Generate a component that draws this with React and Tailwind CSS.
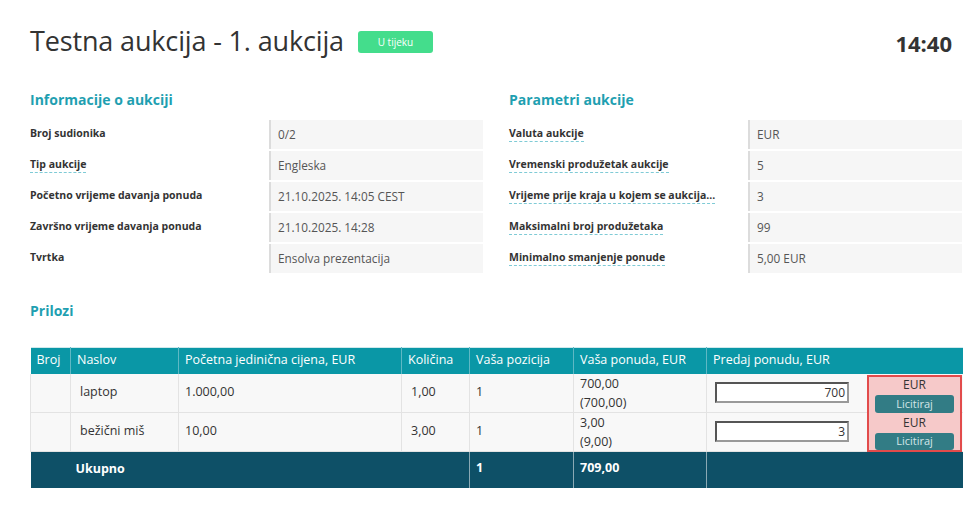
import React from "react";

const leftRows = [
  { l: "Broj sudionika", v: "0/2" },
  { l: "Tip aukcije", v: "Engleska", u: true },
  { l: "Početno vrijeme davanja ponuda", v: "21.10.2025. 14:05 CEST" },
  { l: "Završno vrijeme davanja ponuda", v: "21.10.2025. 14:28" },
  { l: "Tvrtka", v: "Ensolva prezentacija" },
];
const rightRows = [
  { l: "Valuta aukcije", v: "EUR", u: true },
  { l: "Vremenski produžetak aukcije", v: "5", u: true },
  { l: "Vrijeme prije kraja u kojem se aukcija...", v: "3", u: true },
  { l: "Maksimalni broj produžetaka", v: "99", u: true },
  { l: "Minimalno smanjenje ponude", v: "5,00 EUR", u: true },
];

function InfoTable({ title, rows }) {
  return (
    <div className="flex flex-col">
      <h2 className="text-[14px] font-bold text-[#1f9fb1] leading-[20px] mb-[10px]">{title}</h2>
      <div className="flex flex-col gap-[2px]">
        {rows.map((r, i) => (
          <div key={i} className="flex h-[29px]">
            <div className="w-[239px] flex items-start pt-[6px]">
              <span
                className={
                  "text-[10.5px] font-bold text-[#333] leading-[15px] " +
                  (r.u ? "border-b border-dashed border-[#7fcbd6]" : "")
                }
              >
                {r.l}
              </span>
            </div>
            <div className="flex-1 bg-[#f6f6f6] border-l-2 border-[#dcdcdc] pl-[7px] flex items-center text-[11.8px] text-[#555]">
              {r.v}
            </div>
          </div>
        ))}
      </div>
    </div>
  );
}

export default function App() {
  const th = "text-left font-normal px-[6px] border-r border-[#5fb8c4] last:border-r-0";
  const td = "px-[6px] border-r border-b border-[#e3e3e3] text-[12.5px] text-[#333]";
  return (
    <div
      className="w-[974px] h-[505px] bg-white pl-[30px] pr-[12px] pt-[24px] overflow-hidden"
      style={{ fontFamily: "'Open Sans', 'Noto Sans', sans-serif" }}
    >
      <div className="flex items-center justify-between h-[34px]">
        <div className="flex items-center">
          <h1 className="text-[27px] font-normal text-[#333] leading-[34px] tracking-[-0.15px]">
            Testna aukcija - 1. aukcija
          </h1>
          <span className="ml-[14px] mt-[2px] bg-[#44dd8c] text-white text-[10px] rounded-[3px] w-[75px] h-[22px] flex items-center justify-center">
            U tijeku
          </span>
        </div>
        <div className="text-[22px] font-bold text-[#333] mr-[10px] mt-[4px]">14:40</div>
      </div>

      <div className="grid grid-cols-[453px_453px] gap-x-[26px] mt-[32px]">
        <InfoTable title="Informacije o aukciji" rows={leftRows} />
        <InfoTable title="Parametri aukcije" rows={rightRows} />
      </div>

      <h2 className="text-[14px] font-bold text-[#1f9fb1] leading-[20px] mt-[28px]">Prilozi</h2>

      <div className="relative mt-[26px] w-[932px]">
        <table className="w-[932px] table-fixed border-collapse">
          <colgroup>
            <col className="w-[40px]" />
            <col className="w-[108px]" />
            <col className="w-[223px]" />
            <col className="w-[68px]" />
            <col className="w-[104px]" />
            <col className="w-[133px]" />
            <col className="w-[256px]" />
          </colgroup>
          <thead>
            <tr className="bg-[#0a97a6] text-white text-[12.5px] h-[26px] border-t border-[#cfe9ec]">
              <th className={th}>Broj</th>
              <th className={th}>Naslov</th>
              <th className={th}>Početna jedinična cijena, EUR</th>
              <th className={th}>Količina</th>
              <th className={th}>Vaša pozicija</th>
              <th className={th}>Vaša ponuda, EUR</th>
              <th className={th}>Predaj ponudu, EUR</th>
            </tr>
          </thead>
          <tbody className="bg-[#f8f8f8]">
            {[
              { n: "laptop", p: "1.000,00", q: "1,00", pos: "1", o: "700,00", ot: "(700,00)", in: "700" },
              { n: "bežični miš", p: "10,00", q: "3,00", pos: "1", o: "3,00", ot: "(9,00)", in: "3" },
            ].map((r, i) => (
              <tr key={i} className="h-[38px]">
                <td className={td + " border-l"}></td>
                <td className={td + " pl-[9px]"}>{r.n}</td>
                <td className={td}>{r.p}</td>
                <td className={td + " pl-[9px]"}>{r.q}</td>
                <td className={td}>{r.pos}</td>
                <td className={td + " leading-[19px] align-top"}>
                  <div>{r.o}</div>
                  <div>{r.ot}</div>
                </td>
                <td className={td + " border-r-0 pl-[8px]"}>
                  <div className="w-[134px] h-[21px] bg-white border-2 border-t-[#555] border-l-[#555] border-b-[#999] border-r-[#999] text-right pr-[2px] text-[12px] leading-[17px] text-[#333]">
                    {r.in}
                  </div>
                </td>
              </tr>
            ))}
            <tr className="h-[37px] bg-[#0e5067] text-white text-[12.5px] font-bold">
              <td colSpan={4} className="pl-[45px] align-middle border-r border-[#8aa9b4]">Ukupno</td>
              <td className="align-top pt-[7px] px-[6px] border-r border-[#8aa9b4]">1</td>
              <td className="align-top pt-[7px] px-[6px] border-r border-[#8aa9b4]">709,00</td>
              <td></td>
            </tr>
          </tbody>
        </table>
        <div className="absolute left-[837px] top-[28px] w-[95px] h-[77px] bg-[#f6c9c9] border-2 border-[#e24b4b] flex flex-col items-center">
          <div className="text-[12px] text-[#333] leading-[14px] mt-[1px]">EUR</div>
          <div className="mt-[3px] w-[79px] h-[19px] rounded-[3px] bg-[#327c85] text-[#d4e6e8] text-[11px] flex items-center justify-center">
            Licitiraj
          </div>
          <div className="text-[12px] text-[#333] leading-[14px] mt-[3px]">EUR</div>
          <div className="mt-[3px] w-[79px] h-[19px] rounded-[3px] bg-[#327c85] text-[#d4e6e8] text-[11px] flex items-center justify-center">
            Licitiraj
          </div>
        </div>
      </div>
    </div>
  );
}
